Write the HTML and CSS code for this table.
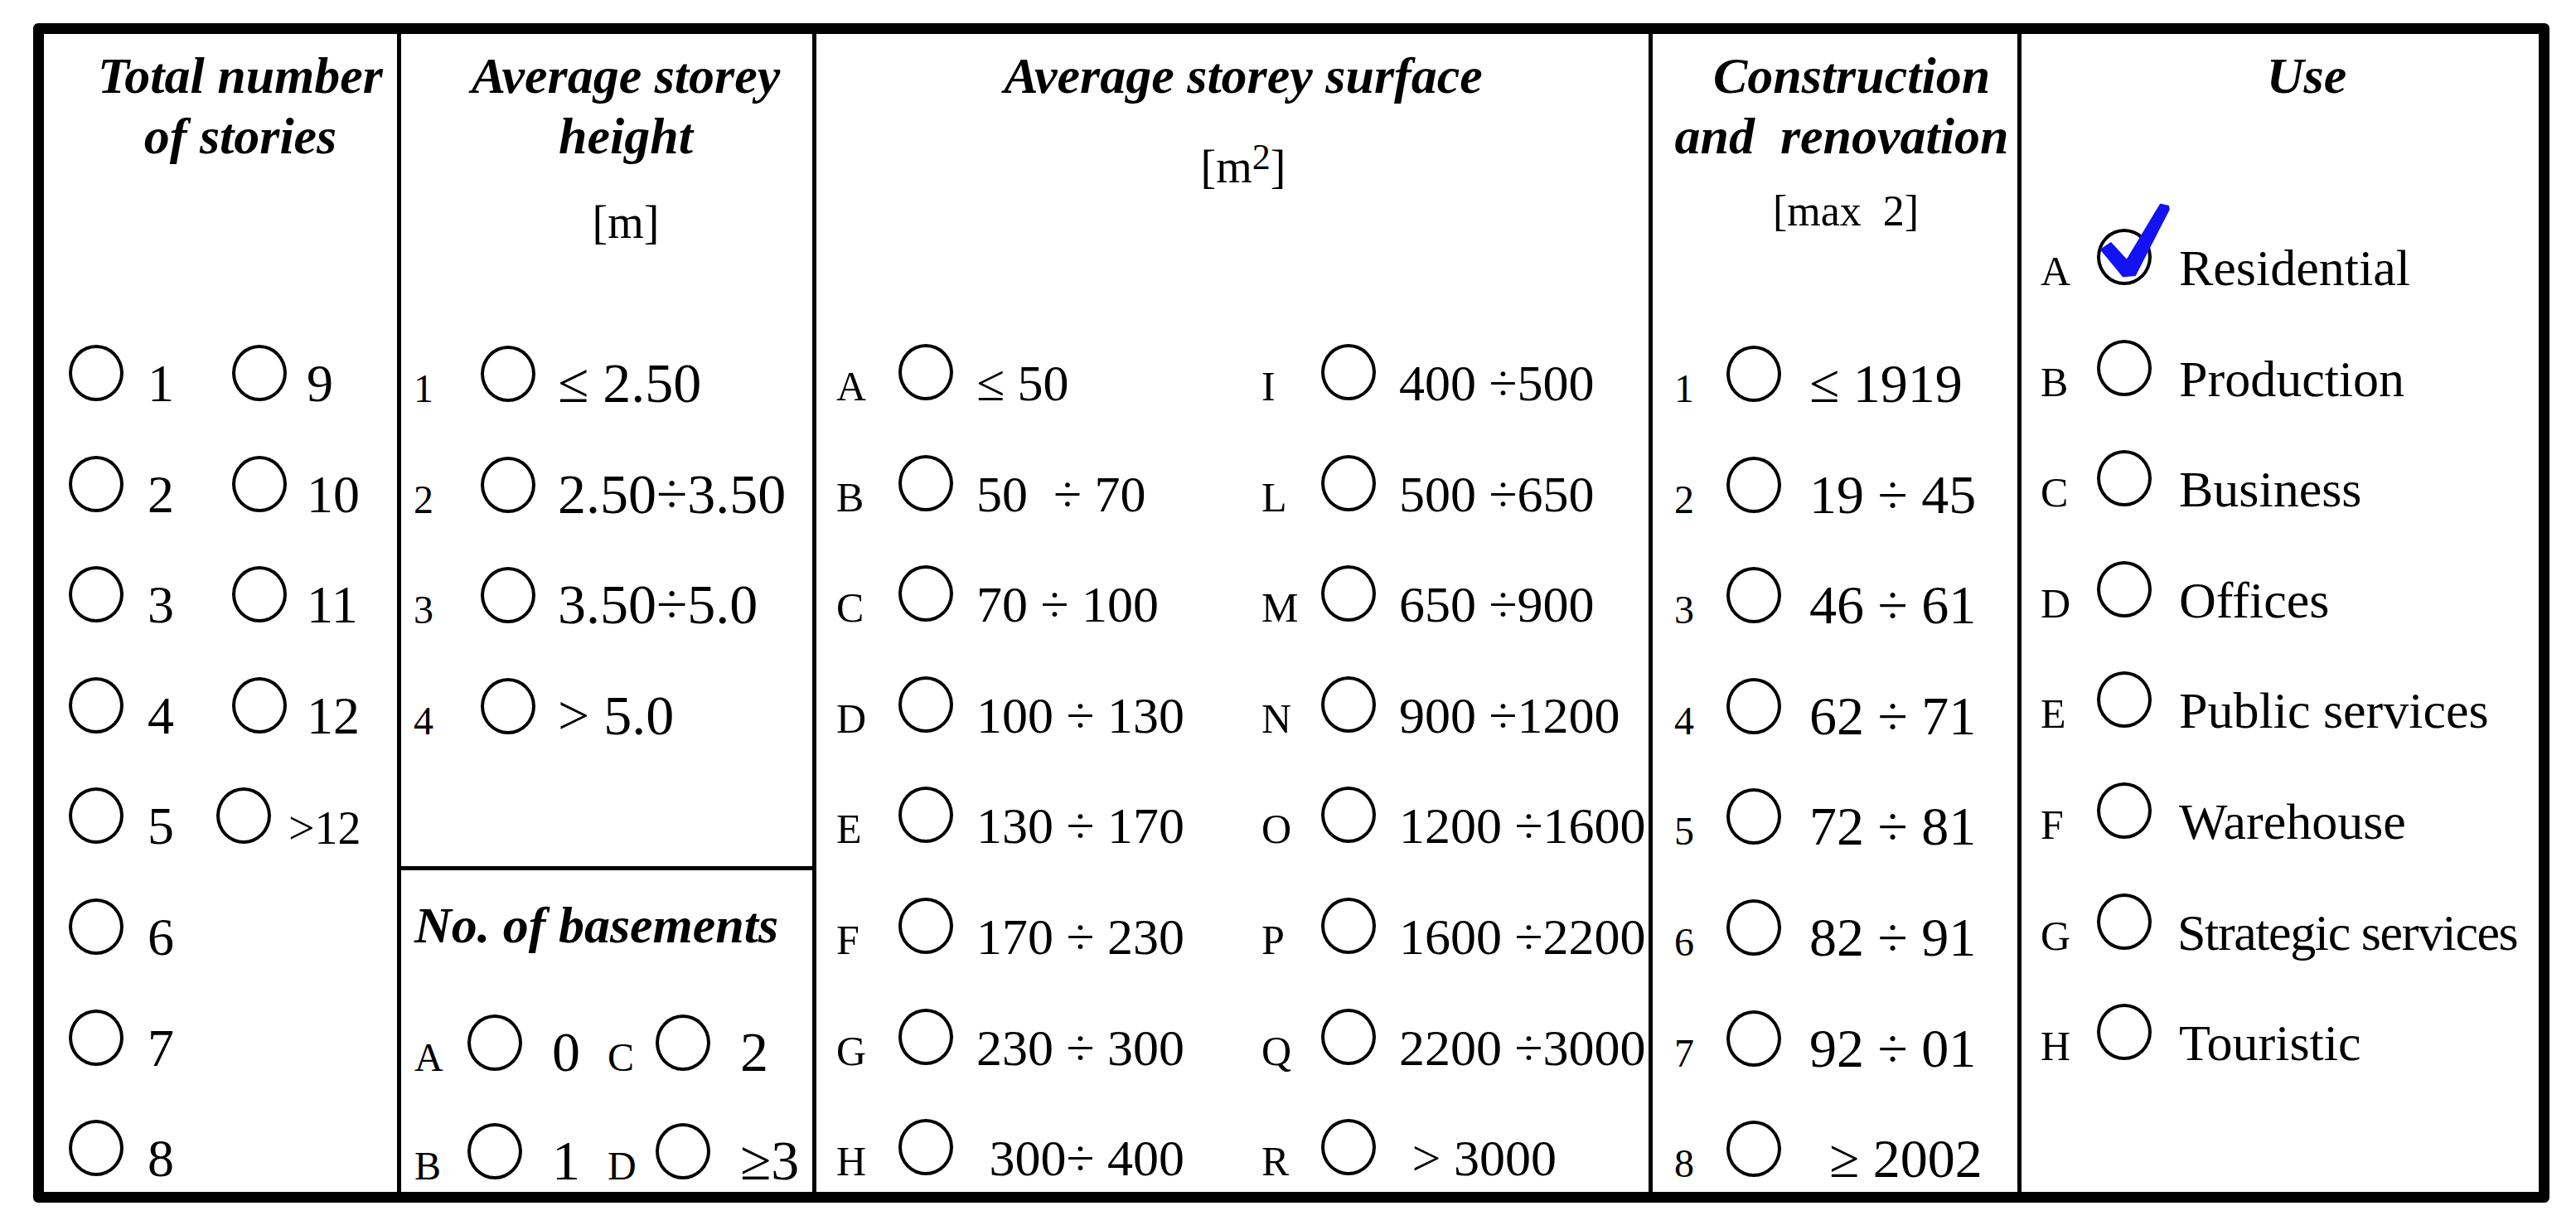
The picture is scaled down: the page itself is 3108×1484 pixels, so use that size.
FILE: index.html
```html
<!DOCTYPE html>
<html lang="en">
<head>
<meta charset="utf-8">
<title>Building survey form</title>
<link rel="stylesheet" href="styles.css">
</head>
<body>
<div class="page">
  <div class="sheet">

    <div class="col c1">
      <div class="head">Total number<br>of stories</div>
      <div class="row"><span class="rb"></span><span class="v w">1</span><span class="rb"></span><span class="v">9</span></div>
      <div class="row"><span class="rb"></span><span class="v w">2</span><span class="rb"></span><span class="v">10</span></div>
      <div class="row"><span class="rb"></span><span class="v w">3</span><span class="rb"></span><span class="v">11</span></div>
      <div class="row"><span class="rb"></span><span class="v w">4</span><span class="rb"></span><span class="v">12</span></div>
      <div class="row"><span class="rb"></span><span class="v ws">5</span><span class="rb"></span><span class="v sm">&gt;12</span></div>
      <div class="row"><span class="rb"></span><span class="v">6</span></div>
      <div class="row"><span class="rb"></span><span class="v">7</span></div>
      <div class="row"><span class="rb"></span><span class="v">8</span></div>
    </div>

    <div class="col c2">
      <div class="upper">
        <div class="head">Average storey<br>height<div class="unit u-m">[m]</div></div>
        <div class="row"><span class="lbl">1</span><span class="rb"></span><span class="v">≤ 2.50</span></div>
        <div class="row"><span class="lbl">2</span><span class="rb"></span><span class="v">2.50÷3.50</span></div>
        <div class="row"><span class="lbl">3</span><span class="rb"></span><span class="v">3.50÷5.0</span></div>
        <div class="row"><span class="lbl">4</span><span class="rb"></span><span class="v">&gt; 5.0</span></div>
      </div>
      <div class="lower">
        <div class="bhead">No. of basements</div>
        <div class="brow"><span class="lbl">A</span><span class="rb"></span><span class="v w">0</span><span class="lbl l2">C</span><span class="rb"></span><span class="v">2</span></div>
        <div class="brow"><span class="lbl">B</span><span class="rb"></span><span class="v w">1</span><span class="lbl l2">D</span><span class="rb"></span><span class="v">≥3</span></div>
      </div>
    </div>

    <div class="col c3">
      <div class="head">Average storey surface<div class="unit u-m2">[m<sup>2</sup>]</div></div>
      <div class="row"><span class="lbl">A</span><span class="rb"></span><span class="v w">≤ 50</span><span class="lbl l2">I</span><span class="rb"></span><span class="v">400 ÷500</span></div>
      <div class="row"><span class="lbl">B</span><span class="rb"></span><span class="v w">50  ÷ 70</span><span class="lbl l2">L</span><span class="rb"></span><span class="v">500 ÷650</span></div>
      <div class="row"><span class="lbl">C</span><span class="rb"></span><span class="v w">70 ÷ 100</span><span class="lbl l2">M</span><span class="rb"></span><span class="v">650 ÷900</span></div>
      <div class="row"><span class="lbl">D</span><span class="rb"></span><span class="v w">100 ÷ 130</span><span class="lbl l2">N</span><span class="rb"></span><span class="v">900 ÷1200</span></div>
      <div class="row"><span class="lbl">E</span><span class="rb"></span><span class="v w">130 ÷ 170</span><span class="lbl l2">O</span><span class="rb"></span><span class="v">1200 ÷1600</span></div>
      <div class="row"><span class="lbl">F</span><span class="rb"></span><span class="v w">170 ÷ 230</span><span class="lbl l2">P</span><span class="rb"></span><span class="v">1600 ÷2200</span></div>
      <div class="row"><span class="lbl">G</span><span class="rb"></span><span class="v w">230 ÷ 300</span><span class="lbl l2">Q</span><span class="rb"></span><span class="v">2200 ÷3000</span></div>
      <div class="row"><span class="lbl">H</span><span class="rb"></span><span class="v w"> 300÷ 400</span><span class="lbl l2">R</span><span class="rb"></span><span class="v"> &gt; 3000</span></div>
    </div>

    <div class="col c4">
      <div class="head"><span class="l1">Construction</span><br>and  renovation<div class="unit u-max">[max  2]</div></div>
      <div class="row"><span class="lbl">1</span><span class="rb"></span><span class="v">≤ 1919</span></div>
      <div class="row"><span class="lbl">2</span><span class="rb"></span><span class="v">19 ÷ 45</span></div>
      <div class="row"><span class="lbl">3</span><span class="rb"></span><span class="v">46 ÷ 61</span></div>
      <div class="row"><span class="lbl">4</span><span class="rb"></span><span class="v">62 ÷ 71</span></div>
      <div class="row"><span class="lbl">5</span><span class="rb"></span><span class="v">72 ÷ 81</span></div>
      <div class="row"><span class="lbl">6</span><span class="rb"></span><span class="v">82 ÷ 91</span></div>
      <div class="row"><span class="lbl">7</span><span class="rb"></span><span class="v">92 ÷ 01</span></div>
      <div class="row"><span class="lbl">8</span><span class="rb"></span><span class="v late">≥ 2002</span></div>
    </div>

    <div class="col c5">
      <div class="head">Use</div>
      <div class="row"><span class="lbl">A</span><span class="rb checked"><svg class="tick" viewBox="0 0 92 92" width="92" height="92" aria-hidden="true"><path d="M5 57 L16.7 49.3 L36 70.3 L76.7 2.7 L86 4.7 L86.7 8.7 L46 88 L31.7 89.3 Z"/></svg></span><span class="v">Residential</span></div>
      <div class="row"><span class="lbl">B</span><span class="rb"></span><span class="v">Production</span></div>
      <div class="row"><span class="lbl">C</span><span class="rb"></span><span class="v">Business</span></div>
      <div class="row"><span class="lbl">D</span><span class="rb"></span><span class="v">Offices</span></div>
      <div class="row"><span class="lbl">E</span><span class="rb"></span><span class="v">Public services</span></div>
      <div class="row"><span class="lbl">F</span><span class="rb"></span><span class="v">Warehouse</span></div>
      <div class="row"><span class="lbl">G</span><span class="rb"></span><span class="v tight">Strategic services</span></div>
      <div class="row"><span class="lbl">H</span><span class="rb"></span><span class="v">Touristic</span></div>
    </div>

  </div>
</div>
</body>
</html>
```

FILE: styles.css
```css
html, body {
  margin: 0;
  padding: 0;
  background: #ffffff;
}

body {
  font-family: "Liberation Serif", "Times New Roman", serif;
  color: #000000;
}

.page {
  padding: 28px 0 0 40px;
}

.sheet {
  width: 3036px;
  height: 1423px;
  box-sizing: border-box;
  border: 13px solid #000000;
  border-radius: 6px;
  display: grid;
  grid-template-columns: 426px 501px 1009px 445px 629px;
  grid-template-rows: 1397px;
  background: #ffffff;
}

.col {
  overflow: hidden;
  box-sizing: border-box;
  min-width: 0;
}

.col + .col {
  border-left: 5px solid #000000;
}

/* headers */
.head {
  box-sizing: border-box;
  padding-top: 14px;
  font-size: 62px;
  line-height: 73px;
  font-weight: 700;
  font-style: italic;
  text-align: center;
  white-space: pre;
}

.unit {
  font-weight: 400;
  font-style: normal;
  font-size: 56px;
  line-height: 64px;
}

.unit sup {
  font-size: 44px;
  line-height: 0;
  vertical-align: 16px;
}

.c1 .head { height: 355px; padding-left: 48px; }
.c2 .head { height: 355px; padding-left: 46px; }
.c3 .head { height: 355px; padding-left: 26px; }
.c4 .head { height: 355px; padding-left: 16px; }
.c4 .head .l1 { display: inline-block; margin-left: 24px; }
.c5 .head { height: 216px; padding-left: 64px; }

.u-m { margin-top: 35px; }
.u-m2 { margin-top: 41px; }
.u-max { margin-top: 22px; font-size: 52px; padding-left: 10px; }

/* rows */
.row {
  height: 133.6px;
  line-height: 133.6px;
  white-space: nowrap;
}

.rb {
  display: inline-block;
  width: 66px;
  height: 68px;
  box-sizing: border-box;
  border: 4px solid #000000;
  border-radius: 50%;
  vertical-align: baseline;
}

.lbl {
  display: inline-block;
  font-size: 48px;
  line-height: 1;
}

.v {
  display: inline-block;
  line-height: 1;
  white-space: pre;
}

/* column 1 */
.c1 .row { font-size: 64px; padding-left: 30px; }
.c1 .v { margin-left: 29px; }
.c1 .v.w { width: 102px; }
.c1 .v.ws { width: 83px; }
.c1 .v.sm { font-size: 56px; margin-left: 21px; }
.c1 .v.w + .rb + .v { margin-left: 24px; }

/* column 2 */
.c2 .upper {
  height: 1004px;
  border-bottom: 5px solid #000000;
}
.c2 .row { font-size: 68px; padding-left: 15px; }
.c2 .row .lbl { width: 81px; }
.c2 .row .v { margin-left: 27px; }

.c2 .bhead {
  padding: 29.6px 0 0 16px;
  font-size: 62px;
  line-height: 73px;
  font-weight: 700;
  font-style: italic;
  white-space: nowrap;
}

.c2 .brow {
  height: 131px;
  line-height: 131px;
  font-size: 68px;
  padding-left: 16px;
  white-space: nowrap;
}
.c2 .bhead + .brow { margin-top: 51px; }
.c2 .brow .lbl { width: 64px; }
.c2 .brow .lbl.l2 { width: 58px; }
.c2 .brow .v { margin-left: 36px; }
.c2 .brow .v.w { width: 67px; }

/* column 3 */
.c3 .row { font-size: 62px; padding-left: 24px; }
.c3 .lbl { width: 75px; font-size: 50px; }
.c3 .lbl.l2 { width: 72px; }
.c3 .v { margin-left: 28px; }
.c3 .v.w { width: 344px; }

/* column 4 */
.c4 .row { font-size: 66px; padding-left: 26px; }
.c4 .lbl { width: 63px; }
.c4 .v { margin-left: 34px; }
.c4 .v.late { margin-left: 58px; }

/* column 5 */
.c5 .row { font-size: 62px; padding-left: 23px; }
.c5 .lbl { width: 68px; font-size: 50px; }
.c5 .v { margin-left: 33px; }
.c5 .v.tight { margin-left: 31px; letter-spacing: -1.4px; }

.rb.checked {
  position: relative;
}

.tick {
  position: absolute;
  left: -4px;
  top: -36px;
  fill: #1212f2;
  stroke: #1212f2;
  stroke-width: 2;
  stroke-linejoin: round;
}
```
